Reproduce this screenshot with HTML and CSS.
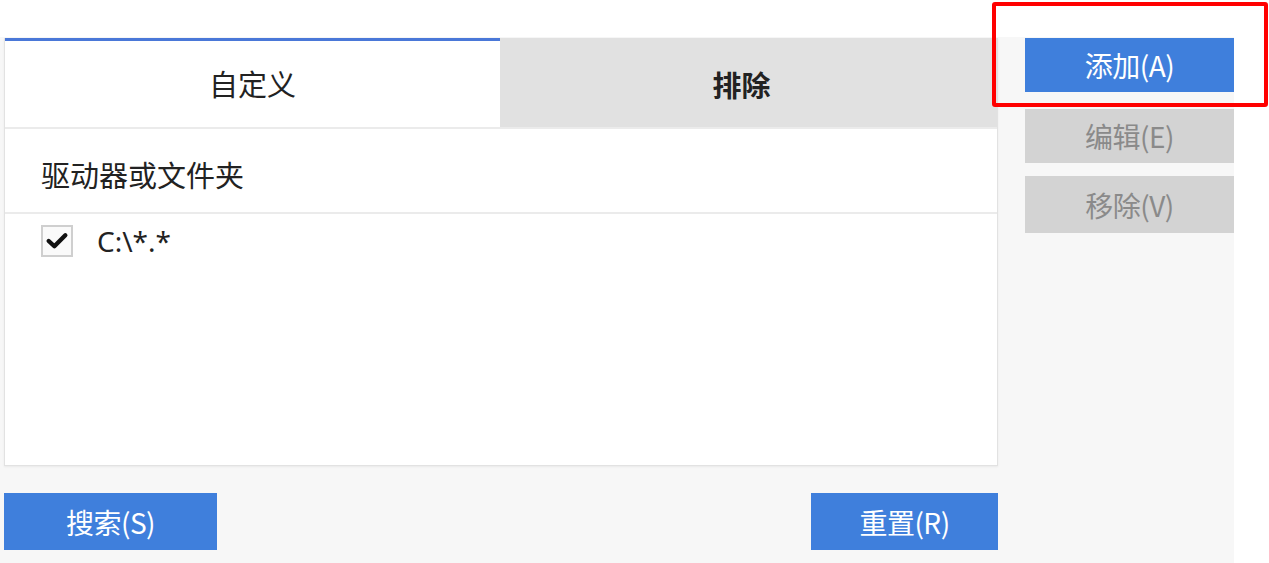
FILE: index.html
```html
<!DOCTYPE html>
<html lang="zh-CN">
<head>
<meta charset="utf-8">
<title>搜索范围</title>
<link rel="stylesheet" href="styles.css">
</head>
<body>
<div class="stage">
  <div class="left">
    <div class="panel">
      <div class="tabs">
        <div class="tab active">自定义</div>
        <div class="tab inactive">排除</div>
      </div>
      <div class="list-head">驱动器或文件夹</div>
      <div class="list">
        <div class="row">
          <span class="check">
            <svg viewBox="0 0 32 32" width="32" height="32"><path d="M6.5 16 L13 22 L25.5 9.5" fill="none" stroke="#111" stroke-width="5" stroke-linecap="round" stroke-linejoin="round"/></svg>
          </span>
          <span class="path">C:\*.*</span>
        </div>
      </div>
    </div>
    <div class="actions">
      <button class="btn primary search">搜索(S)</button>
      <button class="btn primary reset">重置(R)</button>
    </div>
  </div>
  <div class="right">
    <button class="btn primary side add">添加(A)</button>
    <button class="btn disabled side edit">编辑(E)</button>
    <button class="btn disabled side remove">移除(V)</button>
  </div>
</div>
<div class="highlight"></div>
</body>
</html>
```

FILE: styles.css
```css
* { box-sizing: border-box; }
html, body { margin: 0; padding: 0; background: #ffffff; }
body {
  width: 1269px;
  height: 563px;
  overflow: hidden;
  position: relative;
  font-family: "Noto Sans CJK SC", "Noto Sans", sans-serif;
  color: #222222;
}
.stage {
  margin-top: 37px;
  width: 1234px;
  height: 526px;
  background: #f7f7f7;
  display: flex;
  padding: 1px 0 0 4px;
}
.left {
  width: 994px;
  display: flex;
  flex-direction: column;
}
.panel {
  height: 428px;
  background: #ffffff;
  border: 1px solid #e2e2e2;
  border-top: none;
  box-shadow: 0 1px 2px rgba(0,0,0,0.06);
  display: flex;
  flex-direction: column;
}
.tabs {
  display: flex;
  height: 91px;
  border-bottom: 2px solid #ebebeb;
}
.tab {
  display: flex;
  align-items: center;
  justify-content: center;
  font-size: 29px;
}
.tab.active {
  width: 495px;
  background: #ffffff;
  border-top: 3px solid #4a78d8;
  padding-bottom: 2px;
}
.tab.inactive {
  flex: 1;
  background: #e1e1e1;
  font-weight: 700;
  padding-top: 3px;
  padding-right: 14px;
}
.list-head {
  height: 85px;
  border-bottom: 2px solid #ebebeb;
  display: flex;
  align-items: center;
  padding-left: 36px;
  font-size: 29px;
  padding-top: 6px;
}
.list { flex: 1; }
.row {
  display: flex;
  align-items: center;
  height: 52px;
  padding-left: 36px;
  padding-top: 2px;
}
.check {
  width: 32px;
  height: 32px;
  border: 2px solid #cfcfcf;
  background: #fafafa;
  display: flex;
  align-items: center;
  justify-content: center;
}
.check svg { display: block; width: 28px; height: 28px; }
.path {
  margin-left: 24px;
  font-family: "Noto Sans", "Open Sans", sans-serif;
  font-size: 28px;
  color: #222;
}
.actions {
  margin-top: 27px;
  display: flex;
  justify-content: space-between;
}
.btn {
  border: none;
  margin: 0;
  padding: 0;
  font-family: "Noto Sans CJK SC", "Noto Sans", sans-serif;
  font-size: 28px;
  display: flex;
  align-items: center;
  justify-content: center;
  letter-spacing: -0.5px;
}
.btn.primary { background: #3f7fdc; color: #ffffff; }
.btn.disabled { background: #d3d3d3; color: #8a8a8a; }
.search { width: 213px; height: 57px; }
.reset { width: 187px; height: 57px; }
.right {
  margin-left: 27px;
  width: 209px;
  display: flex;
  flex-direction: column;
}
.side { width: 209px; }
.add { height: 54px; }
.edit { height: 54px; margin-top: 17px; }
.remove { height: 57px; margin-top: 13px; }
.highlight {
  position: absolute;
  left: 992px;
  top: 2px;
  width: 276px;
  height: 105px;
  border: 4px solid #ff0000;
  border-radius: 3px;
  pointer-events: none;
}
```
